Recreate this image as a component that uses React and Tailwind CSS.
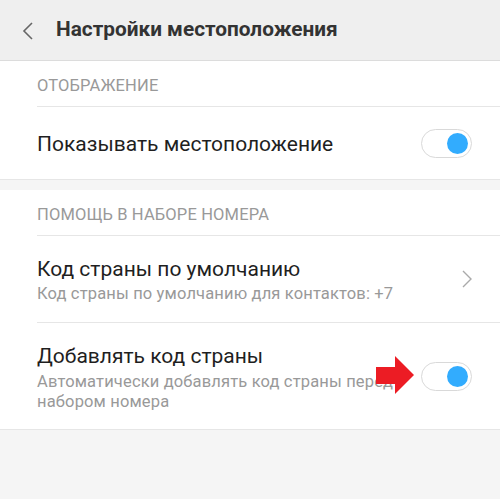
import React from 'react';

const Toggle = () => (
    <div className="w-[51px] h-[29px] rounded-full border border-[#d9d9d9] bg-white flex items-center justify-end pr-[3px] shrink-0">
        <div className="w-[21px] h-[21px] rounded-full bg-[#32acfe]" />
    </div>
);

const SectionTitle = ({ children }) => (
    <div className="h-[46px] flex items-center border-b border-[#e6e6e6] text-[16.5px] text-[#999999] tracking-[0.15px] pt-[5px]">
        {children}
    </div>
);

const App = () => {
    return (
        <div className="w-[500px] h-[499px] bg-[#f5f5f5] overflow-hidden" style={{ fontFamily: 'Roboto, "Noto Sans", sans-serif' }}>
            <div className="h-[61px] bg-[#efefef] border-b border-[#dcdcdc] flex items-center">
                <svg className="ml-[22px] mt-[1px]" width="12" height="18" viewBox="0 0 12 18" fill="none">
                    <path d="M10 1 L2 9 L10 17" stroke="#666" strokeWidth="1.6" />
                </svg>
                <span className="ml-[22px] text-[20.8px] font-bold text-[#333333] pb-[1px]">Настройки местоположения</span>
            </div>

            <div className="bg-white border-b border-[#e6e6e6] pl-[37px]">
                <SectionTitle>ОТОБРАЖЕНИЕ</SectionTitle>
                <div className="h-[72px] flex items-center justify-between pr-[28px]">
                    <span className="text-[21px] text-[#1f1f1f] pt-[3px]">Показывать местоположение</span>
                    <Toggle />
                </div>
            </div>

            <div className="h-[10px]" />

            <div className="bg-white border-b border-[#e6e6e6] pl-[37px]">
                <SectionTitle>ПОМОЩЬ В НАБОРЕ НОМЕРА</SectionTitle>
                <div className="h-[87px] flex items-center justify-between pr-[28px] border-b border-[#e6e6e6]">
                    <div className="flex flex-col pt-[3px]">
                        <span className="text-[21px] text-[#1f1f1f] leading-[26px]">Код страны по умолчанию</span>
                        <span className="text-[16.5px] text-[#999999] tracking-[0.15px] leading-[24px]">Код страны по умолчанию для контактов: +7</span>
                    </div>
                    <svg width="10" height="18" viewBox="0 0 10 18" fill="none">
                        <path d="M1 1 L9 9 L1 17" stroke="#aaaaaa" strokeWidth="1.4" />
                    </svg>
                </div>
                <div className="h-[106px] flex items-center justify-between pr-[28px] relative">
                    <div className="flex flex-col w-[372px] mt-[2px]">
                        <span className="text-[21px] text-[#1f1f1f] leading-[26px]">Добавлять код страны</span>
                        <span className="text-[16.5px] text-[#999999] tracking-[0.15px] leading-[20px] mt-[3px]">Автоматически добавлять код страны перед набором номера</span>
                    </div>
                    <Toggle />
                    <svg className="absolute left-[339px] top-[33px]" width="38" height="38" viewBox="0 0 38 38">
                        <polygon points="0,11 19,11 19,0 38,19 19,38 19,28 0,28" fill="#ec1c24" />
                    </svg>
                </div>
            </div>
        </div>
    );
};

export default App;
